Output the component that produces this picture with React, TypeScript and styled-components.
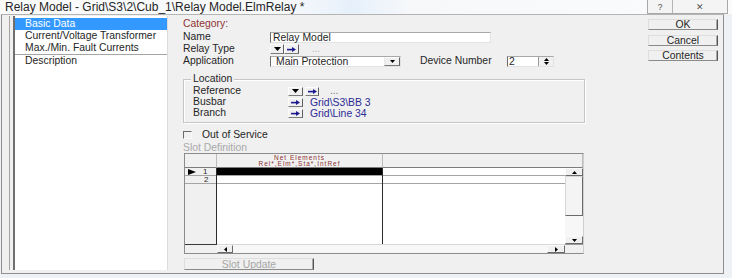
import React from "react";
import styled, { createGlobalStyle } from "styled-components";

const GlobalStyle = createGlobalStyle`
  html, body {
    margin: 0;
    padding: 0;
  }
  body {
    width: 732px;
    height: 278px;
    overflow: hidden;
    background: #eef2f6;
    font-family: "Liberation Sans", Arial, sans-serif;
    color: #262626;
  }
`;

const DownTri: React.FC<{ w?: number; h?: number }> = ({ w = 7, h = 4 }) => (
  <svg width={w} height={h} viewBox={`0 0 ${w} ${h}`}>
    <polygon points={`0,0 ${w},0 ${w / 2},${h}`} fill="#000" />
  </svg>
);

const UpTri: React.FC<{ w?: number; h?: number }> = ({ w = 5, h = 3 }) => (
  <svg width={w} height={h} viewBox={`0 0 ${w} ${h}`}>
    <polygon points={`0,${h} ${w},${h} ${w / 2},0`} fill="#000" />
  </svg>
);

const SideTri: React.FC<{ left?: boolean }> = ({ left }) => (
  <svg width={3} height={5} viewBox="0 0 3 5">
    <polygon points={left ? "3,0 3,5 0,2.5" : "0,0 0,5 3,2.5"} fill="#000" />
  </svg>
);

const GoArrow: React.FC = () => (
  <svg width={9} height={5} viewBox="0 0 9 5">
    <rect x={0} y={1.8} width={5} height={1.6} fill="#1b1b8f" />
    <polygon points="5,0 9,2.5 5,5" fill="#1b1b8f" />
  </svg>
);

const RowPointer: React.FC = () => (
  <svg width={8} height={6} viewBox="0 0 8 6">
    <polygon points="0,0 8,3 0,6" fill="#000" />
  </svg>
);

export default function App() {
  return (
    <>
      <GlobalStyle />
      <Frame>
        <TitleBar>
          <TitleText>Relay Model - Grid\S3\2\Cub_1\Relay Model.ElmRelay *</TitleText>
          <CaptionButtons>
            <CaptionButton $w={24}>?</CaptionButton>
            <CaptionButton $w={54} $last>✕</CaptionButton>
          </CaptionButtons>
        </TitleBar>
        <Client>
          <ListPanel>
            <List>
              <ListItem $selected>Basic Data</ListItem>
              <ListItem>Current/Voltage Transformer</ListItem>
              <ListItem $divider>Max./Min. Fault Currents</ListItem>
              <ListItem>Description</ListItem>
            </List>
          </ListPanel>

          <Main>
            <CategoryLabel>Category:</CategoryLabel>
            <FieldRow $first>
              <Label>Name</Label>
              <TextBox $w={221}>Relay Model</TextBox>
            </FieldRow>
            <FieldRow>
              <Label>Relay Type</Label>
              <Tools>
                <ToolButton $w={14}>
                  <DownTri />
                </ToolButton>
                <ToolButton $w={15}>
                  <GoArrow />
                </ToolButton>
                <Dots>...</Dots>
              </Tools>
            </FieldRow>
            <FieldRow>
              <Label>Application</Label>
              <Combo>
                <ComboText>Main Protection</ComboText>
                <ComboButton>
                  <DownTri w={5} h={3} />
                </ComboButton>
              </Combo>
              <DeviceLabel>Device Number</DeviceLabel>
              <Spin>
                <ComboText $pad={1}>2</ComboText>
                <SpinButtons>
                  <UpTri />
                  <DownTri w={5} h={3} />
                </SpinButtons>
              </Spin>
            </FieldRow>

            <Group>
              <GroupLegend>Location</GroupLegend>
              <LocRow>
                <Label>Reference</Label>
                <Tools>
                  <ToolButton $w={15} $h={9}>
                    <DownTri />
                  </ToolButton>
                  <ToolButton $w={14} $h={9} $gap={2}>
                    <GoArrow />
                  </ToolButton>
                  <Dots $dark>...</Dots>
                </Tools>
              </LocRow>
              <LocRow>
                <Label>Busbar</Label>
                <Tools>
                  <ToolButton $w={15} $h={9}>
                    <GoArrow />
                  </ToolButton>
                  <PathLink>Grid\S3\BB 3</PathLink>
                </Tools>
              </LocRow>
              <LocRow>
                <Label>Branch</Label>
                <Tools>
                  <ToolButton $w={15} $h={9}>
                    <GoArrow />
                  </ToolButton>
                  <PathLink>Grid\Line 34</PathLink>
                </Tools>
              </LocRow>
            </Group>

            <CheckRow>
              <CheckBox />
              <Label>Out of Service</Label>
            </CheckRow>
            <DisabledLabel>Slot Definition</DisabledLabel>

            <Table>
              <HeadCell />
              <HeadCell $title>
                <HeadLine>Net Elements</HeadLine>
                <HeadLine>Rel*,Elm*,Sta*,IntRef</HeadLine>
              </HeadCell>
              <HeadCell $span />
              <RowHeads>
                <RowHead>
                  <RowPointer />
                  <span>1</span>
                </RowHead>
                <RowHead $num>2</RowHead>
              </RowHeads>
              <DataCol $dark>
                <DataCell $selected />
                <DataCell />
              </DataCol>
              <DataCol>
                <DataCell />
                <DataCell />
              </DataCol>
              <VScroll>
                <ScrollButton $h={8}>
                  <UpTri />
                </ScrollButton>
                <Thumb />
                <ScrollTrack />
                <ScrollButton $h={8}>
                  <DownTri w={5} h={3} />
                </ScrollButton>
              </VScroll>
              <CornerCell />
              <HScroll>
                <ScrollButton $w={16}>
                  <SideTri left />
                </ScrollButton>
                <ScrollTrack />
                <ScrollButton $w={18}>
                  <SideTri />
                </ScrollButton>
              </HScroll>
              <CornerCell $end />
            </Table>

            <PlainButton $w={130} $disabled>
              Slot Update
            </PlainButton>
          </Main>

          <Side>
            <PlainButton $w={70}>OK</PlainButton>
            <PlainButton $w={70}>Cancel</PlainButton>
            <PlainButton $w={70}>Contents</PlainButton>
          </Side>
        </Client>
      </Frame>
    </>
  );
}

const Frame = styled.div`
  width: 732px;
  height: 278px;
  display: flex;
  flex-direction: column;
`;

const TitleBar = styled.div`
  height: 14px;
  display: flex;
  justify-content: space-between;
  align-items: flex-start;
  padding-left: 5px;
  background: linear-gradient(90deg, #fbfbfc 0%, #f6f8fa 40%, #e6f0fb 48%, #f6f8fa 56%, #fbfbfc 100%);
`;

const TitleText = styled.div`
  font-size: 12px;
  line-height: 14px;
  color: #262626;
  white-space: nowrap;
`;

const CaptionButtons = styled.div`
  display: flex;
  height: 14px;
  margin-right: 4px;
  box-sizing: border-box;
  border: 1px solid #a9a9a9;
  border-top: none;
  background: #f4f4f4;
`;

const CaptionButton = styled.div<{ $w: number; $last?: boolean }>`
  width: ${(p) => p.$w}px;
  display: flex;
  align-items: center;
  justify-content: center;
  font-size: 9px;
  color: #555;
  border-right: ${(p) => (p.$last ? "none" : "1px solid #b5b5b5")};
`;

const Client = styled.div`
  margin-left: 1px;
  width: 721px;
  height: 258px;
  border: 1px solid #8f8f8f;
  border-top-color: #b4b4b4;
  background: #f0f0f0;
  display: flex;
  align-items: flex-start;
`;

const ListPanel = styled.div`
  margin: 1px 0 0 7px;
  height: 254px;
  box-sizing: border-box;
  border-left: 1px solid #a2a2a2;
  padding-left: 3px;
  display: flex;
`;

const List = styled.div`
  width: 152px;
  padding-top: 2px;
  background: #fff;
  border-left: 2px solid #6f6f6f;
  border-right: 1px solid #dcdcdc;
`;

const ListItem = styled.div<{ $selected?: boolean; $divider?: boolean }>`
  height: 12px;
  line-height: 12px;
  padding-left: 10px;
  font-size: 10.4px;
  white-space: nowrap;
  background: ${(p) => (p.$selected ? "#3399ff" : "transparent")};
  color: ${(p) => (p.$selected ? "#fff" : "#262626")};
  border-bottom: ${(p) => (p.$divider ? "1px solid #a5a5a5" : "none")};
`;

const Main = styled.div`
  margin: 3px 0 0 15px;
  width: 402px;
  display: flex;
  flex-direction: column;
`;

const Label = styled.div`
  font-size: 10.4px;
  line-height: 12px;
  white-space: nowrap;
`;

const CategoryLabel = styled(Label)`
  height: 12px;
  color: #8e3434;
`;

const FieldRow = styled.div<{ $first?: boolean }>`
  display: grid;
  grid-template-columns: 87px auto auto auto 1fr;
  align-items: center;
  height: 12px;
  margin-top: ${(p) => (p.$first ? 1 : 0)}px;
`;

const TextBox = styled.div<{ $w: number }>`
  width: ${(p) => p.$w}px;
  height: 11px;
  box-sizing: border-box;
  border-style: solid;
  border-width: 1px;
  border-color: #a8a8a8 #e2e2e2 #e2e2e2 #6a6a6a;
  background: #fff;
  padding-left: 2px;
  font-size: 10.4px;
  line-height: 9px;
`;

const Tools = styled.div`
  display: flex;
  align-items: center;
`;

const ToolButton = styled.div<{ $w: number; $h?: number; $gap?: number }>`
  width: ${(p) => p.$w}px;
  height: ${(p) => p.$h ?? 10}px;
  margin-left: ${(p) => p.$gap ?? 0}px;
  box-sizing: border-box;
  border: 1px solid;
  border-color: #fdfdfd #5f5f5f #7a7a7a #fdfdfd;
  background: #f0f0f0;
  display: flex;
  align-items: center;
  justify-content: center;
`;

const Dots = styled.span<{ $dark?: boolean }>`
  margin-left: ${(p) => (p.$dark ? 11 : 13)}px;
  font-size: 10px;
  line-height: 10px;
  color: ${(p) => (p.$dark ? "#777" : "#b8b8b8")};
`;

const Combo = styled.div`
  width: 131px;
  height: 11px;
  box-sizing: border-box;
  border-style: solid;
  border-width: 1px;
  border-color: #a8a8a8 #e2e2e2 #e2e2e2 #6a6a6a;
  background: #fff;
  display: flex;
  align-items: stretch;
`;

const ComboText = styled.div<{ $pad?: number }>`
  flex: 1;
  padding-left: ${(p) => p.$pad ?? 5}px;
  font-size: 10.4px;
  line-height: 9px;
  white-space: nowrap;
`;

const ComboButton = styled.div`
  width: 16px;
  box-sizing: border-box;
  border: 1px solid;
  border-color: #fdfdfd #5f5f5f #7a7a7a #e8e8e8;
  background: #f0f0f0;
  display: flex;
  align-items: center;
  justify-content: center;
`;

const DeviceLabel = styled(Label)`
  width: 87px;
  margin-left: 19px;
`;

const Spin = styled(Combo)`
  width: 47px;
`;

const SpinButtons = styled.div`
  width: 15px;
  box-sizing: border-box;
  border-left: 1px solid #9a9a9a;
  display: flex;
  flex-direction: column;
  align-items: center;
  justify-content: center;
  gap: 1px;
  background: #f0f0f0;
`;

const Group = styled.div`
  position: relative;
  margin-top: 12px;
  height: 44px;
  box-sizing: border-box;
  border: 1px solid #c6c6c6;
  box-shadow: inset 1px 1px 0 #fff, 1px 1px 0 #fff;
  padding: 5px 0 0 9px;
`;

const GroupLegend = styled(Label)`
  position: absolute;
  top: -7px;
  left: 7px;
  padding: 0 2px;
  background: #f0f0f0;
`;

const LocRow = styled.div`
  display: grid;
  grid-template-columns: 95px auto;
  align-items: center;
  height: 11px;
`;

const PathLink = styled.span`
  margin-left: 7px;
  font-size: 10.4px;
  line-height: 11px;
  color: #2b2b95;
`;

const CheckRow = styled.div`
  margin-top: 6px;
  height: 11px;
  display: flex;
  align-items: center;
  gap: 10px;
`;

const CheckBox = styled.div`
  width: 9px;
  height: 8px;
  box-sizing: border-box;
  border: 1px solid;
  border-color: #6a6a6a #f8f8f8 #f8f8f8 #6a6a6a;
  background: #f0f0f0;
`;

const DisabledLabel = styled(Label)`
  margin-top: 2px;
  height: 11px;
  line-height: 11px;
  color: #a9a9a9;
`;

const Table = styled.div`
  margin-left: 1px;
  width: 400px;
  height: 101px;
  box-sizing: border-box;
  border: 1px solid;
  border-color: #8c8c8c #d0d0d0 #8c8c8c #8c8c8c;
  display: grid;
  grid-template-columns: 32px 166px 182px 18px;
  grid-template-rows: 14px 76px 9px;
  background: #f0f0f0;
`;

const HeadCell = styled.div<{ $title?: boolean; $span?: boolean }>`
  grid-column: ${(p) => (p.$span ? "span 2" : "auto")};
  box-sizing: border-box;
  border-right: 1px solid #bcbcbc;
  border-bottom: 1px solid #7c7c7c;
  background: #f0f0f0;
  display: flex;
  flex-direction: column;
  align-items: center;
  justify-content: center;
  padding-top: 1px;
`;

const HeadLine = styled.span`
  font-size: 6.5px;
  line-height: 6.5px;
  letter-spacing: 1px;
  white-space: nowrap;
  color: #8e3030;
`;

const RowHeads = styled.div`
  box-sizing: border-box;
  border-right: 1px solid #2a2a2a;
  display: flex;
  flex-direction: column;
  background: #f0f0f0;
`;

const RowHead = styled.div<{ $num?: boolean }>`
  height: 8px;
  box-sizing: border-box;
  border-bottom: 1px solid #a4a4a4;
  display: flex;
  align-items: center;
  gap: 7px;
  padding-left: ${(p) => (p.$num ? 19 : 3)}px;
  font-size: 8px;
  line-height: 7px;
`;

const DataCol = styled.div<{ $dark?: boolean }>`
  box-sizing: border-box;
  border-right: ${(p) => (p.$dark ? "1px solid #2a2a2a" : "none")};
  background: #fff;
  display: flex;
  flex-direction: column;
`;

const DataCell = styled.div<{ $selected?: boolean }>`
  height: 8px;
  box-sizing: border-box;
  border-bottom: 1px solid #a4a4a4;
  background: ${(p) => (p.$selected ? "#000" : "#fff")};
`;

const VScroll = styled.div`
  display: flex;
  flex-direction: column;
  background: #f7f7f7;
`;

const ScrollButton = styled.div<{ $w?: number; $h?: number }>`
  flex: none;
  width: ${(p) => (p.$w ? `${p.$w}px` : "auto")};
  height: ${(p) => (p.$h ? `${p.$h}px` : "auto")};
  box-sizing: border-box;
  border: 1px solid;
  border-color: #fafafa #6a6a6a #6a6a6a #fafafa;
  background: #f0f0f0;
  display: flex;
  align-items: center;
  justify-content: center;
`;

const Thumb = styled.div`
  height: 40px;
  box-sizing: border-box;
  border: 1px solid;
  border-color: #d8d8d8 #6a6a6a #6a6a6a #d8d8d8;
  background: #f4f4f4;
`;

const ScrollTrack = styled.div`
  flex: 1;
  background: #f7f7f7;
`;

const CornerCell = styled.div<{ $end?: boolean }>`
  box-sizing: border-box;
  border-top: 1px solid ${(p) => (p.$end ? "#9a9a9a" : "#3a3a3a")};
  background: #f0f0f0;
`;

const HScroll = styled.div`
  grid-column: span 2;
  display: flex;
  background: #f0f0f0;
  border-top: 1px solid #d9d9d9;
`;

const PlainButton = styled.div<{ $w: number; $disabled?: boolean }>`
  width: ${(p) => p.$w}px;
  height: ${(p) => (p.$disabled ? 12 : 11)}px;
  margin-top: ${(p) => (p.$disabled ? 4 : 0)}px;
  margin-left: ${(p) => (p.$disabled ? 1 : 0)}px;
  box-sizing: border-box;
  border: 1px solid;
  border-color: #dedede #555 #8a8a8a #dedede;
  box-shadow: inset -1px 0 0 #a8a8a8;
  background: #f0f0f0;
  display: flex;
  align-items: center;
  justify-content: center;
  font-size: 10.4px;
  line-height: 9px;
  color: ${(p) => (p.$disabled ? "#a6a6a6" : "#262626")};
`;

const Side = styled.div`
  margin: 4px 0 0 63px;
  display: flex;
  flex-direction: column;
  gap: 4.5px;
`;
